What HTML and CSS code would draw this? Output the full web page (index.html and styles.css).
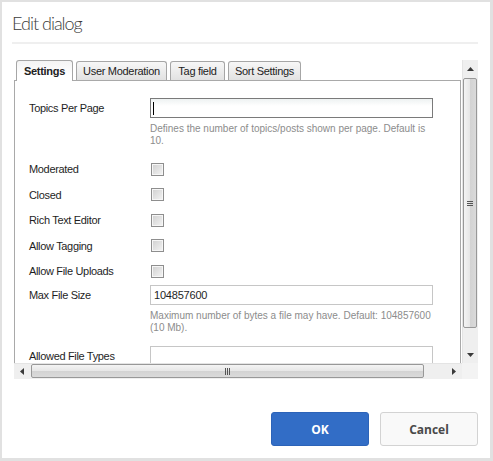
FILE: index.html
```html
<!DOCTYPE html>
<html>
<head>
<meta charset="utf-8">
<link rel="stylesheet" href="styles.css">
</head>
<body>
<div class="dialog">
  <header class="head"><h1>Edit dialog</h1></header>
  <div class="scrollbox">
    <div class="viewport">
      <div class="tabs">
        <div class="tab active t-settings">Settings</div>
        <div class="tab t-users">User Moderation</div>
        <div class="tab t-tag">Tag field</div>
        <div class="tab t-sort">Sort Settings</div>
      </div>
      <div class="panel">
        <div class="row">
          <span class="label">Topics Per Page</span>
          <div class="input focused"><span class="caret"></span></div>
        </div>
        <p class="desc">Defines the number of topics/posts shown per page. Default is 10.</p>
        <div class="checks">
          <div class="row crow"><span class="label">Moderated</span><span class="cb"></span></div>
          <div class="row crow"><span class="label">Closed</span><span class="cb"></span></div>
          <div class="row crow"><span class="label">Rich Text Editor</span><span class="cb"></span></div>
          <div class="row crow"><span class="label">Allow Tagging</span><span class="cb"></span></div>
          <div class="row crow"><span class="label">Allow File Uploads</span><span class="cb"></span></div>
        </div>
        <div class="row r-max">
          <span class="label">Max File Size</span>
          <div class="input">104857600</div>
        </div>
        <p class="desc">Maximum number of bytes a file may have. Default: 104857600 (10 Mb).</p>
        <div class="row r-types">
          <span class="label">Allowed File Types</span>
          <div class="input"></div>
        </div>
      </div>
    </div>
    <div class="vbar">
      <div class="sbtn up"><svg width="7" height="4" viewBox="0 0 7 4"><polygon points="0,4 3.5,0 7,4" fill="#3a3a3a"/></svg></div>
      <div class="vthumb"><span class="grip-h"></span></div>
      <div class="track"></div>
      <div class="sbtn down"><svg width="7" height="4" viewBox="0 0 7 4"><polygon points="0,0 3.5,4 7,0" fill="#3a3a3a"/></svg></div>
    </div>
    <div class="hbar">
      <div class="sbtn left"><svg width="4" height="7" viewBox="0 0 4 7"><polygon points="4,0 0,3.5 4,7" fill="#3a3a3a"/></svg></div>
      <div class="hthumb"><span class="grip-v"></span></div>
      <div class="track"></div>
      <div class="sbtn right"><svg width="4" height="7" viewBox="0 0 4 7"><polygon points="0,0 4,3.5 0,7" fill="#3a3a3a"/></svg></div>
    </div>
    <div class="corner"></div>
  </div>
  <footer class="foot">
    <button class="btn ok">OK</button>
    <button class="btn cancel">Cancel</button>
  </footer>
</div>
</body>
</html>
```
FILE: styles.css
```css
* { box-sizing: border-box; }
html, body { height: 100%; }
body {
  margin: 0;
  background: #e1e1e1;
  padding: 2px 3px 3px 2px;
  font-family: "Liberation Sans", Arial, sans-serif;
}
.dialog {
  background: #fff;
  height: 456px;
  display: flex;
  flex-direction: column;
}
.head {
  margin: 0 12px 0 10px;
  padding: 9px 0 7px;
  border-bottom: 2px solid #efefef;
}
.head h1 {
  margin: 0;
  font: 300 18px/24px Lato, "Open Sans", sans-serif;
  letter-spacing: -1px;
  color: #3c3c3c;
}
.scrollbox {
  margin: 16px 12px 0 12px;
  display: grid;
  grid-template-columns: 1fr 16px;
  grid-template-rows: 303px 16px;
}
.viewport { overflow: hidden; }
.tabs {
  display: flex;
  align-items: flex-end;
  gap: 3px;
  padding-left: 2px;
  height: 20px;
}
.tab {
  height: 19px;
  border: 1px solid #a6a6a6;
  border-bottom: none;
  border-radius: 3px 3px 0 0;
  background: linear-gradient(#f7f7f7, #e2e2e2);
  font-size: 11px;
  letter-spacing: -0.3px;
  line-height: 18px;
  text-align: center;
  color: #222;
  white-space: nowrap;
}
.t-settings { width: 57px; }
.t-users { width: 91px; }
.t-tag { width: 55px; }
.t-sort { width: 73px; }
.tab.active {
  height: 21px;
  margin-bottom: -1px;
  position: relative;
  z-index: 1;
  font-weight: bold;
  line-height: 20px;
  background: linear-gradient(#f4f4f4, #ffffff 70%);
}
.panel {
  border: 1px solid #a9a9a9;
  border-bottom: none;
  margin-right: 1px;
  height: 290px;
  padding: 17px 0 0 14px;
}
.row {
  display: grid;
  grid-template-columns: 121px 283px;
  align-items: center;
}
.label {
  font-size: 11px;
  letter-spacing: -0.33px;
  color: #1e1e1e;
  white-space: nowrap;
}
.input {
  height: 20px;
  border: 1px solid #c6c6c6;
  background: #fff;
  font-size: 11px;
  letter-spacing: -0.2px;
  line-height: 18px;
  padding-left: 3px;
  color: #1e1e1e;
  position: relative;
}
.input.focused {
  border-color: #7a7a7a;
  background: linear-gradient(#eef2f2, #ffffff 7px);
}
.caret {
  position: absolute;
  left: 2px;
  top: 3px;
  width: 1px;
  height: 13px;
  background: #000;
}
.desc {
  margin: 5px 0 0 121px;
  width: 283px;
  font-size: 10px;
  line-height: 12px;
  color: #8c8c8c;
}
.checks { margin-top: 9.5px; }
.crow { height: 25.5px; }
.cb {
  width: 13px;
  height: 13px;
  margin-left: 1px;
  border: 1px solid #8e8e8e;
  box-shadow: inset 0 0 0 1px #f6f6f6;
  background: linear-gradient(135deg, #cfcfcf, #f4f4f4);
}
.r-max { margin-top: 1px; }
.r-types { margin-top: 12px; }

.vbar {
  background: #efefef;
  display: flex;
  flex-direction: column;
  border-left: 1px solid #e4e4e4;
}
.hbar {
  background: #efefef;
  display: flex;
  border-top: 1px solid #e4e4e4;
}
.corner { background: #f3f3f3; }
.sbtn {
  display: flex;
  align-items: center;
  justify-content: center;
  flex: none;
}
.sbtn svg { display: block; }
.up { height: 18px; }
.down { height: 16px; }
.left, .right { width: 16px; }
.track { flex: 1; }
.vthumb {
  height: 250px;
  width: 14px;
  border: 1px solid #989898;
  border-radius: 2px;
  background: linear-gradient(90deg, #f4f4f4, #e6e6e6 50%, #d3d3d3 52%, #dadada);
  display: flex;
  align-items: center;
  justify-content: center;
}
.hthumb {
  width: 393px;
  margin: 0 0 1px 1px;
  border: 1px solid #989898;
  border-radius: 2px;
  background: linear-gradient(#f4f4f4, #e6e6e6 50%, #d3d3d3 52%, #dadada);
  display: flex;
  align-items: center;
  justify-content: center;
}
.grip-h {
  width: 6px;
  height: 5px;
  background: repeating-linear-gradient(#555 0 1px, transparent 1px 2px);
}
.grip-v {
  width: 5px;
  height: 7px;
  background: repeating-linear-gradient(90deg, #555 0 1px, transparent 1px 2px);
}
.foot {
  display: flex;
  justify-content: flex-end;
  gap: 11px;
  margin-top: 33px;
  padding-right: 12px;
}
.btn {
  width: 98px;
  height: 34px;
  border-radius: 3px;
  font: 700 12px "Open Sans", sans-serif;
  cursor: pointer;
}
.ok {
  background: #326dc6;
  border: 1px solid #2c63b8;
  color: #fff;
}
.cancel {
  background: #f9f9f9;
  border: 1px solid #d3d3d3;
  color: #4a4a4a;
}
```
